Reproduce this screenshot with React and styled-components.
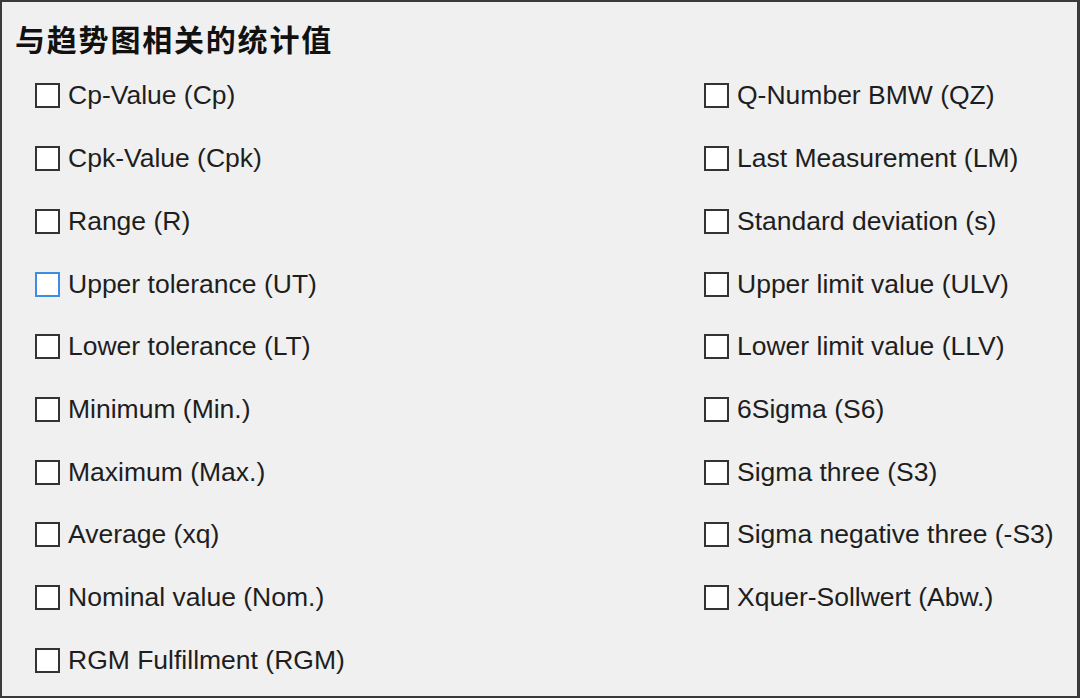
import React from 'react';
import styled, { createGlobalStyle } from 'styled-components';

const GlobalStyle = createGlobalStyle`
	html, body {
		margin: 0;
		padding: 0;
		background: #f0f0f0;
	}
	#root {
		width: 1080px;
		height: 698px;
	}
`;

const leftItems = [
	'Cp-Value (Cp)',
	'Cpk-Value (Cpk)',
	'Range (R)',
	'Upper tolerance (UT)',
	'Lower tolerance (LT)',
	'Minimum (Min.)',
	'Maximum (Max.)',
	'Average (xq)',
	'Nominal value (Nom.)',
	'RGM Fulfillment (RGM)',
];

const rightItems = [
	'Q-Number BMW (QZ)',
	'Last Measurement (LM)',
	'Standard deviation (s)',
	'Upper limit value (ULV)',
	'Lower limit value (LLV)',
	'6Sigma (S6)',
	'Sigma three (S3)',
	'Sigma negative three (-S3)',
	'Xquer-Sollwert (Abw.)',
];

const StatsPanel = () => {
	return (
		<>
			<GlobalStyle />
			<Panel>
				<Title>与趋势图相关的统计值</Title>
				<OptionGrid>
					{leftItems.map(label => (
						<Option key={label}>
							<Box focused={label === 'Upper tolerance (UT)'} />
							<Label>{label}</Label>
						</Option>
					))}
					{rightItems.map(label => (
						<Option key={label}>
							<Box />
							<Label>{label}</Label>
						</Option>
					))}
				</OptionGrid>
			</Panel>
		</>
	);
};

const Panel = styled.div`
	box-sizing: border-box;
	width: 1080px;
	height: 698px;
	background: #f0f0f0;
	border: 2px solid #3a3a3a;
	border-right-width: 3px;
	padding: 16px 0 0 13px;
	display: flex;
	flex-direction: column;
`;

const Title = styled.div`
	font-family: "Noto Sans CJK SC", "Noto Sans", sans-serif;
	font-weight: 700;
	font-size: 30px;
	letter-spacing: 1.8px;
	line-height: 40px;
	color: #111;
`;

const OptionGrid = styled.div`
	display: grid;
	grid-auto-flow: column;
	grid-template-rows: repeat(10, 62.7px);
	grid-template-columns: 669px 1fr;
	margin: 6.6px 0 0 20px;
`;

const Option = styled.div`
	display: flex;
	align-items: center;
	gap: 8px;
`;

const Box = styled.span`
	box-sizing: border-box;
	width: 25px;
	height: 25px;
	background: #fff;
	border: 2px solid ${props => (props.focused ? '#3d8ee0' : '#333')};
	flex-shrink: 0;
`;

const Label = styled.span`
	font-family: "Liberation Sans", Arial, sans-serif;
	font-size: 26.5px;
	color: #1e1e1e;
	white-space: nowrap;
`;

export default StatsPanel;
